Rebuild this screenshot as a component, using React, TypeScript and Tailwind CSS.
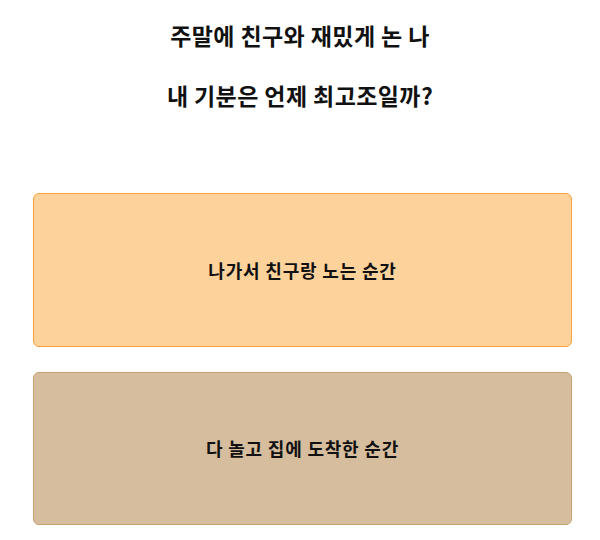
export default function App() {
  return (
    <div className="w-[600px] h-[540px] bg-white" style={{ fontFamily: '"Noto Sans CJK KR", "Noto Sans", sans-serif' }}>
      <div className="flex flex-col items-center pt-[20px] text-[23px] font-bold tracking-[0.4px] text-[#111] leading-[30px]">
        <p>주말에 친구와 재밌게 논 나</p>
        <p className="mt-[30px]">내 기분은 언제 최고조일까?</p>
      </div>
      <div className="flex flex-col gap-[25px] pl-[33px] pr-[28px] mt-[83px]">
        <button className="h-[154px] rounded-[6px] border border-[#f7a23c] bg-[#fdd29b] text-[18px] font-bold tracking-[0.8px] text-[#111]">
          나가서 친구랑 노는 순간
        </button>
        <button className="h-[153px] rounded-[6px] border border-[#c8a273] bg-[#d5bd9e] text-[18px] font-bold tracking-[0.8px] text-[#111]">
          다 놀고 집에 도착한 순간
        </button>
      </div>
    </div>
  );
}
